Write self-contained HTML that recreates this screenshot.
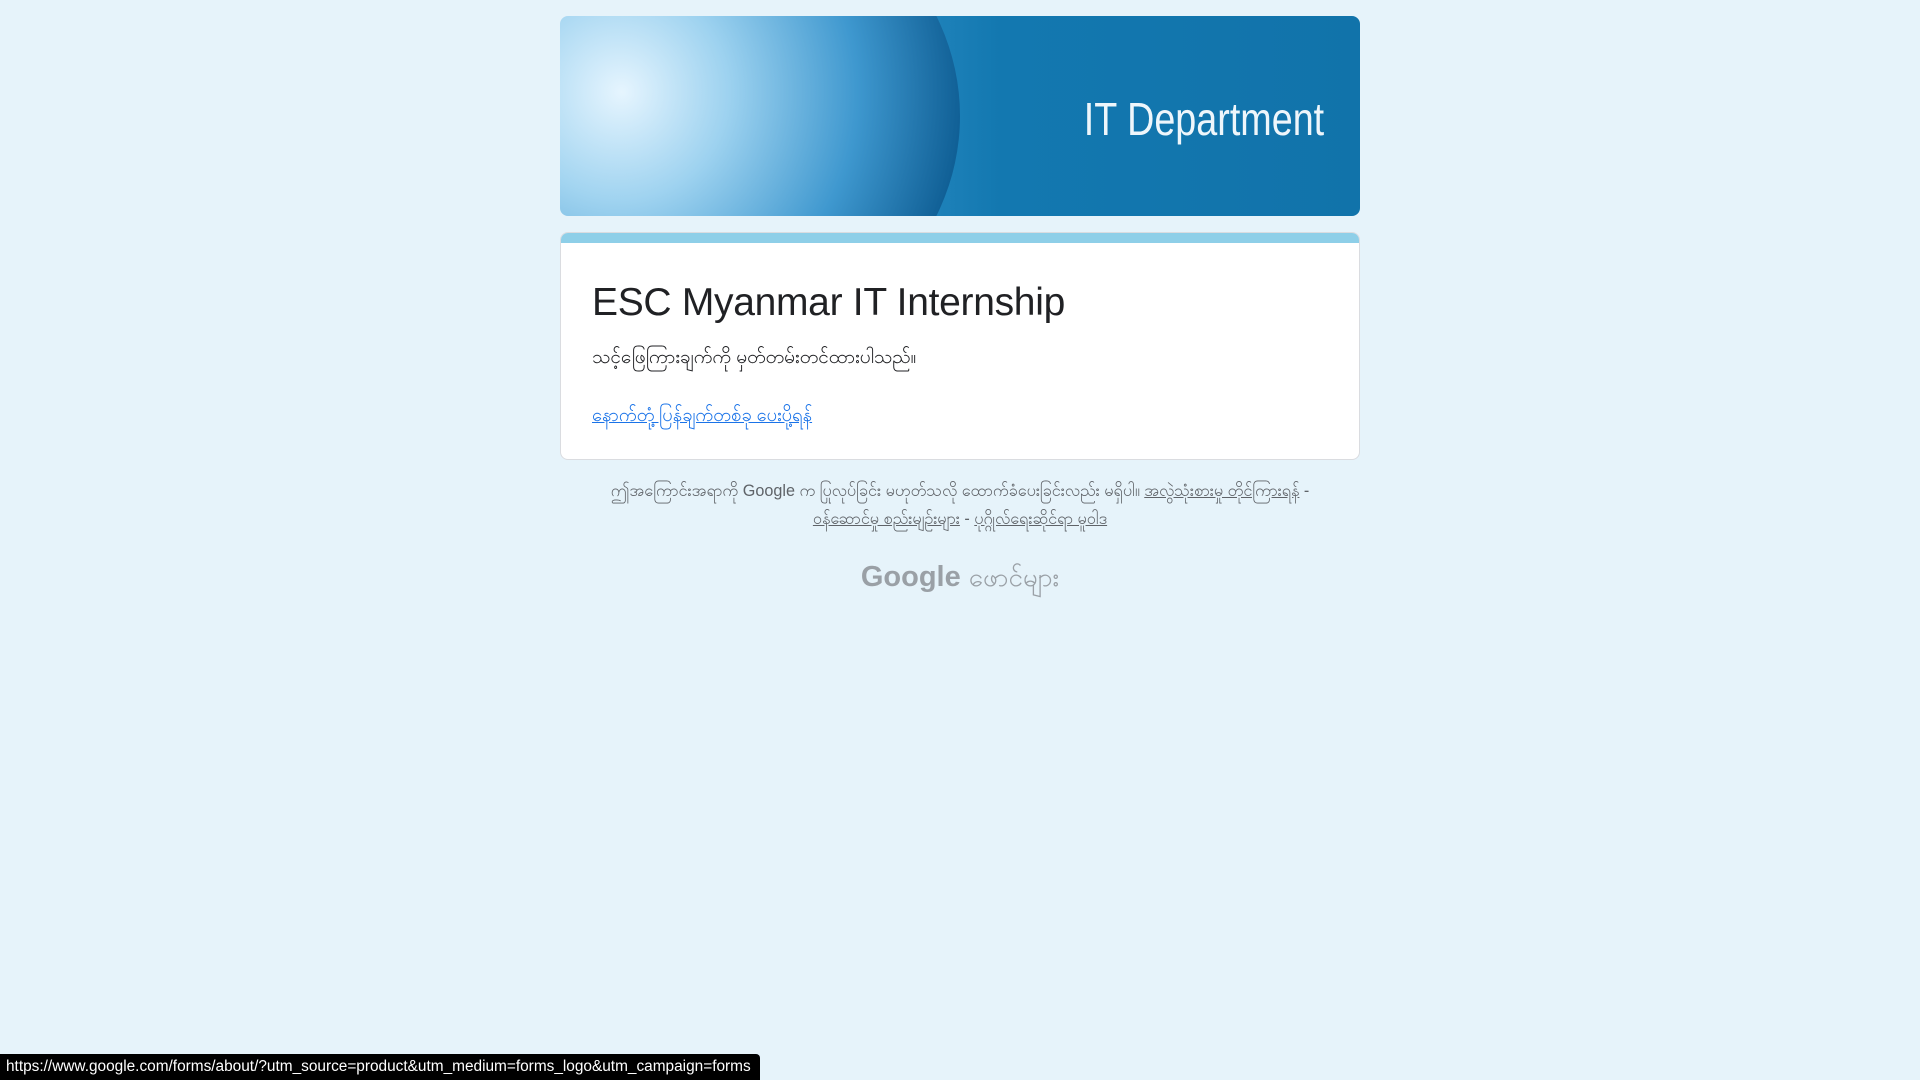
<!DOCTYPE html>
<html><head><meta charset="utf-8"><style>
body{margin:0;width:1920px;height:1080px;background:#e6f3fa;font-family:"Liberation Sans","Noto Sans CJK SC",sans-serif;position:relative;overflow:hidden}
.banner{position:absolute;left:560px;top:16px;width:800px;height:200px;border-radius:8px;overflow:hidden;background:linear-gradient(90deg,#e8f4fc 0%,#7cc0e6 18%,#2a8cc4 38%,#1378b0 55%,#1173aa 100%)}
.banner .globe{position:absolute;left:-120px;top:-140px;width:520px;height:480px;border-radius:50%;background:radial-gradient(circle at 35% 45%,#e8f6ff 0%,#9fd3f0 25%,#3f98cf 55%,#0e5c92 80%,#0b4f80 100%);opacity:.95}
.banner .t{position:absolute;right:36px;top:76px;color:#eef6fb;font-size:46px;font-family:"Liberation Sans Narrow","Liberation Sans",sans-serif;transform:scaleX(.82);transform-origin:right}
.card{position:absolute;left:560px;top:232px;width:798px;height:226px;background:#fff;border:1px solid #dadce0;border-radius:8px;overflow:hidden}
.card .bar{height:10px;background:#8ecfe8}
h1{position:absolute;left:31px;top:48px;margin:0;font-weight:400;font-size:39px;color:#202124;letter-spacing:-0.3px}
.d{position:absolute;left:31px;top:112px;font-size:19px;color:#202124}
.l{position:absolute;left:31px;top:170px;font-size:18.3px;color:#1a73e8;text-decoration:underline}
.f{position:absolute;left:540px;width:840px;text-align:center;font-size:16.2px;color:#5f6368;line-height:28px;top:477px}
.g{position:absolute;left:0;width:1920px;text-align:center;top:560px;font-size:29px;color:#9aa0a6}
.s{position:absolute;left:0;top:1054px;width:760px;height:26px;background:#000;color:#fff;font-size:15.4px;line-height:26px;padding-left:6px;box-sizing:border-box;border-top-right-radius:4px}
</style></head><body>
<div class="banner"><div class="globe"></div><div class="t">IT Department</div></div>
<div class="card"><div class="bar"></div>
<h1>ESC Myanmar IT Internship</h1>
<div class="d">သင့်ဖြေကြားချက်ကို မှတ်တမ်းတင်ထားပါသည်။</div>
<div class="l">နောက်တုံ့ပြန်ချက်တစ်ခု ပေးပို့ရန်</div>
</div>
<div class="f">ဤအကြောင်းအရာကို Google က ပြုလုပ်ခြင်း မဟုတ်သလို ထောက်ခံပေးခြင်းလည်း မရှိပါ။ <u>အလွဲသုံးစားမှု တိုင်ကြားရန်</u> -<br><u>ဝန်ဆောင်မှု စည်းမျဉ်းများ</u> - <u>ပုဂ္ဂိုလ်ရေးဆိုင်ရာ မူဝါဒ</u></div>
<div class="g"><b style="font-weight:600">Google</b> <span style="font-size:26px">ဖောင်များ</span></div>
<div class="s">https://www.google.com/forms/about/?utm_source=product&amp;utm_medium=forms_logo&amp;utm_campaign=forms</div>
</body></html>
